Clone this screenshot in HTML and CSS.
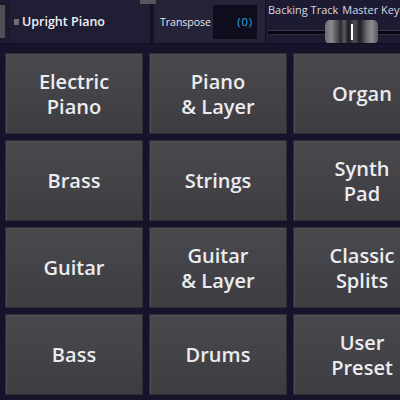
FILE: index.html
```html
<!DOCTYPE html>
<html lang="en">
<head>
    <meta charset="UTF-8">
    <title>Voices</title>
    <link rel="stylesheet" href="styles.css">
</head>
<body>
    <div class="screen">
        <div class="topbar">
            <div class="edge"></div>
            <div class="voice">
                <span class="voice-mark"></span>
                <span class="voice-name">Upright Piano</span>
                <span class="scroll-tab"></span>
            </div>
            <div class="transpose">
                <span class="transpose-label">Transpose</span>
                <div class="transpose-value">(0)</div>
            </div>
            <div class="mixer">
                <div class="mixer-labels">
                    <span>Backing Track</span>
                    <span>Master Key</span>
                </div>
                <div class="slider">
                    <div class="slider-track"></div>
                    <div class="slider-thumb"><span class="thumb-line"></span></div>
                </div>
            </div>
        </div>
        <div class="grid">
            <div class="pad">Electric<br>Piano</div>
            <div class="pad">Piano<br>&amp; Layer</div>
            <div class="pad">Organ</div>
            <div class="pad">Brass</div>
            <div class="pad">Strings</div>
            <div class="pad">Synth<br>Pad</div>
            <div class="pad">Guitar</div>
            <div class="pad">Guitar<br>&amp; Layer</div>
            <div class="pad">Classic<br>Splits</div>
            <div class="pad">Bass</div>
            <div class="pad">Drums</div>
            <div class="pad">User<br>Preset</div>
        </div>
    </div>
</body>
</html>
```

FILE: styles.css
```css
html, body {
    margin: 0;
    padding: 0;
}
body {
    background: #15142a;
    font-family: "Open Sans", "DejaVu Sans", sans-serif;
}
.screen {
    width: 400px;
    height: 400px;
    overflow: hidden;
}
.topbar {
    height: 43px;
    display: flex;
    background: #1c1b31;
    border-bottom: 1px solid #0f0e20;
}
.edge {
    flex-shrink: 0;
    width: 5px;
    height: 33px;
    margin-top: 5px;
    background: #4e4e55;
}
.voice {
    flex-shrink: 0;
    position: relative;
    width: 140px;
    margin-left: 5px;
    display: flex;
    align-items: center;
    background: #1f1e34;
    border-right: 3px solid #121124;
}
.voice-mark {
    width: 5px;
    height: 6px;
    margin: 0 3px 0 4px;
    background: #6e6e78;
}
.voice-name {
    color: #f2f2f6;
    font-size: 12.5px;
    font-weight: 600;
}
.scroll-tab {
    position: absolute;
    top: 0;
    right: -6px;
    width: 16px;
    height: 4px;
    background: #55555c;
}
.transpose {
    flex-shrink: 0;
    width: 110px;
    margin-left: 2px;
    display: flex;
    align-items: center;
    background: #242338;
    border-right: 1px solid #121124;
}
.transpose-label {
    color: #e6e6ec;
    font-size: 10.5px;
    padding-left: 5px;
    width: 58px;
    box-sizing: border-box;
    white-space: nowrap;
}
.transpose-value {
    width: 44px;
    height: 34px;
    box-sizing: border-box;
    background: #0e0d1e;
    color: #3aa8e0;
    font-size: 11px;
    letter-spacing: 1px;
    display: flex;
    align-items: center;
    justify-content: flex-end;
    padding-right: 4px;
}
.mixer {
    flex: 1;
    min-width: 0;
    overflow: hidden;
    padding-left: 2px;
}
.mixer-labels {
    display: flex;
    gap: 4px;
    color: #d8d8e0;
    font-size: 11px;
    padding-top: 2px;
    white-space: nowrap;
}
.slider {
    position: relative;
    height: 26px;
}
.slider-track {
    position: absolute;
    left: 0;
    right: 0;
    top: 13px;
    height: 3px;
    background: #07060e;
    border-top: 1px solid #3a3950;
    border-bottom: 1px solid #2c2b42;
}
.slider-thumb {
    position: absolute;
    left: 57px;
    top: 3px;
    width: 53px;
    height: 24px;
    border-radius: 5px;
    background: linear-gradient(90deg, #6a6a70 0, #8a8a90 12%, #2a2a30 30%, #5a5a60 36%, #1e1e24 44%, #4e4e54 56%, #1e1e24 66%, #707076 80%, #8a8a90 88%, #5a5a60 100%);
}
.thumb-line {
    position: absolute;
    left: 26px;
    top: 4px;
    width: 2px;
    height: 16px;
    background: #ffffff;
}
.grid {
    display: grid;
    grid-template-columns: repeat(3, 138px);
    grid-auto-rows: 81px;
    gap: 6px;
    padding: 9px 0 0 5px;
}
.pad {
    display: flex;
    align-items: center;
    justify-content: center;
    text-align: center;
    color: #ececf0;
    font-size: 20px;
    font-weight: 600;
    line-height: 25px;
    background: linear-gradient(180deg, #48484d 0, #424247 55%, #3c3c41 100%);
    border: 1px solid #2c2c33;
    box-sizing: border-box;
    box-shadow: inset 1px 1px 0 #505056;
}
```
